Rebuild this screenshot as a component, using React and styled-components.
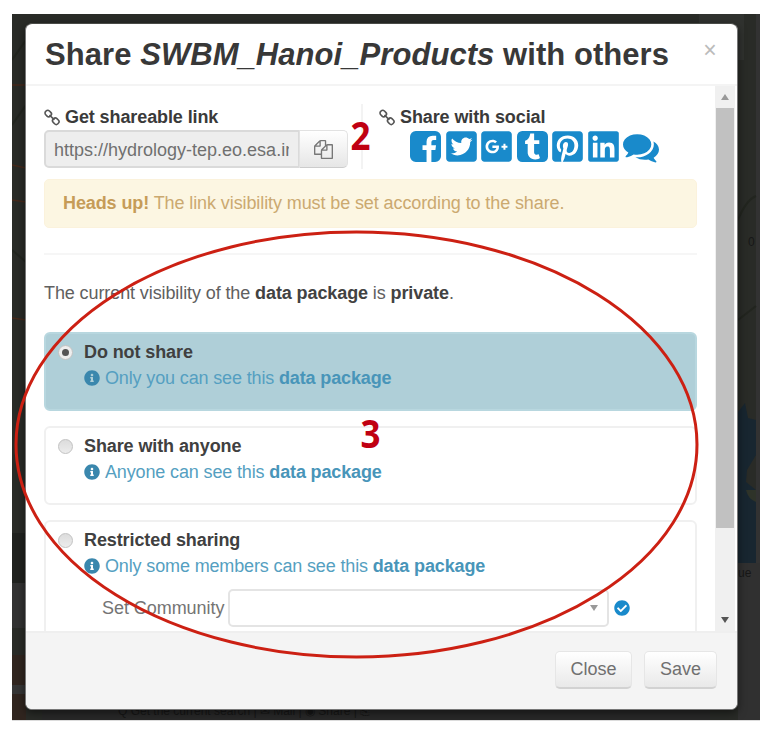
import React from "react";
import styled, { createGlobalStyle } from "styled-components";
import {
  FaTwitterSquare,
  FaGooglePlusSquare,
  FaPinterestSquare,
  FaLinkedin,
  FaInfoCircle,
  FaCheckCircle,
} from "react-icons/fa";

const GlobalStyle = createGlobalStyle`
  * { box-sizing: border-box; }
  body { margin: 0; background: #fff; font-family: "Liberation Sans", Arial, sans-serif; }
`;

const Page = styled.main`
  width: 774px;
  height: 740px;
  padding: 14px 14px 0 12px;
  overflow: hidden;
`;

const Backdrop = styled.div`
  position: relative;
  width: 748px;
  height: 707px;
  padding: 9px 22px 0 13px;
  background: #292b27;
  border-bottom: 1px solid #dcdcdc;
  overflow: hidden;
`;

const MapArt = styled.svg`
  position: absolute;
  inset: 0;
`;

const Dialog = styled.section`
  position: relative;
  display: flex;
  flex-direction: column;
  width: 713px;
  height: 687px;
  background: #fff;
  border: 1px solid #777;
  border-top: 1px solid #494b47;
  border-radius: 7px;
  overflow: hidden;
  box-shadow: 0 3px 9px rgba(0, 0, 0, 0.5);
`;

const Header = styled.header`
  display: flex;
  justify-content: space-between;
  flex: none;
  height: 62px;
  padding: 11px 20px 0 19px;
  border-bottom: 2px solid #f4f4f4;
`;

const Title = styled.h1`
  margin: 0;
  font-size: 31px;
  line-height: 39px;
  letter-spacing: 0.06px;
  color: #383838;
  white-space: nowrap;
`;

const CloseX = styled.button`
  width: 14px;
  height: 28px;
  margin-top: 1px;
  padding: 0;
  border: 0;
  background: none;
  font: 23px/28px "Liberation Sans", sans-serif;
  color: #bbb;
`;

const Body = styled.div`
  display: flex;
  flex: none;
  height: 545px;
  overflow: hidden;
`;

const Content = styled.div`
  flex: none;
  width: 671px;
  padding: 18px 0 0 18px;
`;

const ScrollTrack = styled.div`
  display: flex;
  flex-direction: column;
  align-items: center;
  width: 20px;
  margin-left: 18px;
  background: #f0f0f0;
`;

const ScrollArrow = styled.div`
  display: flex;
  align-items: center;
  justify-content: center;
  height: 22px;
`;

const Thumb = styled.div`
  width: 18px;
  height: 420px;
  margin-bottom: auto;
  background: #c1c1c1;
`;

const ShareRow = styled.div`
  display: flex;
  height: 75px;
`;

const LinkColumn = styled.div`
  width: 319px;
  height: 65px;
  border-right: 2px solid #f3f3f3;
`;

const SocialColumn = styled.div`
  padding-left: 16px;
`;

const Label = styled.div`
  display: flex;
  align-items: center;
  gap: 5px;
  height: 26px;
  font-size: 18px;
  font-weight: bold;
  letter-spacing: -0.1px;
  color: #3a3a3a;
  white-space: nowrap;
`;

const LinkGroup = styled.div`
  display: flex;
  width: 304px;
  height: 38px;
`;

const LinkField = styled.div`
  width: 255px;
  padding: 0 9px 0 8px;
  border: 2px solid #dadada;
  border-right-width: 1px;
  border-radius: 5px 0 0 5px;
  background: #eee;
  font-size: 18px;
  line-height: 36px;
  color: #707070;
  white-space: nowrap;
`;

const Clip = styled.div`
  overflow: hidden;
`;

const CopyButton = styled.button`
  display: flex;
  align-items: center;
  justify-content: center;
  width: 50px;
  padding: 0;
  border: 1px solid #e2e2e2;
  border-bottom-color: #ccc;
  border-radius: 0 5px 5px 0;
  background: linear-gradient(#fff, #e6e6e6);
`;

const SocialIcons = styled.div`
  display: flex;
  align-items: center;
  gap: 4px;
  padding-left: 31px;
  height: 33px;
  color: #198acb;
  svg { flex: none; }
`;

const SquareIcon = styled.span`
  display: flex;
  width: 31.5px;
  height: 32px;
  justify-content: center;
  align-items: center;
`;

const Alert = styled.div`
  height: 49px;
  padding-left: 18px;
  border: 1px solid #fbf2dc;
  border-radius: 5px;
  background: #fcf6e2;
  font-size: 18px;
  line-height: 47px;
  letter-spacing: -0.1px;
  color: #cba970;
  b { color: #c69c58; }
`;

const Divider = styled.hr`
  height: 2px;
  margin: 25px 0 25px;
  border: 0;
  background: #f6f6f6;
`;

const Visibility = styled.p`
  height: 26px;
  margin: 0 0 26px;
  font-size: 18px;
  line-height: 27px;
  letter-spacing: -0.1px;
  color: #606060;
  b { color: #424242; }
`;

const Option = styled.div`
  display: grid;
  grid-template-columns: 38px 1fr;
  height: ${(p) => p.$height || 79}px;
  margin-bottom: 15px;
  padding-top: 7px;
  border: 2px solid ${(p) => (p.$active ? "#b8d7df" : "#f0f0f0")};
  border-radius: 6px;
  background: ${(p) => (p.$active ? "#afcfd8" : "#fff")};
  align-content: start;
`;

const Radio = styled.span`
  display: flex;
  align-items: center;
  justify-content: center;
  width: 15px;
  height: 15px;
  margin: 4px 0 0 12px;
  border: 1px solid #c2c2c2;
  border-radius: 50%;
  background: ${(p) => (p.$checked ? "#eee" : "linear-gradient(#dcdcdc, #ececec)")};
  &::after {
    content: "";
    width: 7px;
    height: 7px;
    border-radius: 50%;
    background: ${(p) => (p.$checked ? "#555" : "transparent")};
  }
`;

const OptionName = styled.div`
  font-size: 18px;
  font-weight: bold;
  line-height: 23px;
  letter-spacing: -0.1px;
  color: #404040;
`;

const OptionHint = styled.div`
  display: flex;
  align-items: center;
  gap: 5px;
  height: 28px;
  margin-bottom: -2px;
  font-size: 18px;
  letter-spacing: -0.14px;
  color: #559fc1;
  white-space: pre;
  svg { flex: none; color: #3a87ad; }
  b { color: #4895b9; }
`;

const Community = styled.div`
  display: flex;
  align-items: center;
  height: 38px;
  margin: 11px 0 0 18px;
  font-size: 18px;
  letter-spacing: -0.05px;
  color: #747474;
  white-space: nowrap;
`;

const CommunityLabel = styled.span`
  flex: none;
  width: 126px;
`;

const Select = styled.div`
  display: flex;
  align-items: center;
  justify-content: flex-end;
  width: 381px;
  height: 38px;
  margin-right: 5px;
  padding-right: 9px;
  border: 2px solid #e4e4e4;
  border-radius: 5px;
`;

const Footer = styled.footer`
  display: flex;
  flex: 1;
  justify-content: flex-end;
  gap: 12px;
  padding: 18px 20px 0;
  border-top: 2px solid #efefef;
  background: #f4f4f4;
`;

const Button = styled.button`
  width: ${(p) => p.$width}px;
  height: 38px;
  padding: 0 0 1px;
  border: 1px solid #e6e6e6;
  border-bottom: 2px solid #d2d2d2;
  border-radius: 5px;
  background: linear-gradient(#fff, #e9e9e9);
  font: 18px "Liberation Sans", sans-serif;
  color: #707070;
`;

const Annotations = styled.svg`
  position: absolute;
  left: 0;
  top: 0;
  font: bold 39px "Open Sans", "Noto Sans", sans-serif;
`;

const ChainIcon = () => (
  <svg width="16" height="17" viewBox="0 0 17 17" fill="none" stroke="#555" strokeWidth="1.7">
    <rect x="1" y="1.500" width="7" height="5.600" rx="2.500" transform="rotate(45 4.500 4.300)" />
    <rect x="9" y="9.600" width="7" height="5.600" rx="2.500" transform="rotate(45 12.500 12.400)" />
    <path d="M5.800 5.800 11 11" />
  </svg>
);

const FacebookIcon = () => (
  <svg width="31" height="31" viewBox="0 128 1536 1536" fill="currentColor">
    <path d="M1248 128q119 0 203.500 84.500t84.500 203.500v960q0 119-84.500 203.500t-203.500 84.500h-188v-595h199l30-232h-229v-148q0-56 23.500-84t91.500-28l122-1v-207q-63-9-178-9-136 0-217.500 80t-81.500 226v171h-200v232h200v595h-532q-119 0-203.500-84.500t-84.500-203.500v-960q0-119 84.500-203.500t203.500-84.500h960z" />
  </svg>
);

const TumblrIcon = () => (
  <svg width="31" height="31" viewBox="0 128 1536 1536">
    <rect y="128" width="1536" height="1536" rx="260" fill="currentColor" />
    <path
      fill="#fff"
      d="M1136 1461l-62-183q-44 22-103 22-36 1-62-10.500t-38.500-31.500-17.500-40.500-5-43.500v-398h257v-194h-256v-326h-188q-8 0-9 10-5 44-17.500 87t-39 95-77 95-118.500 68v165h130v418q0 57 21.500 115t65 111 121 85.500 176.500 30.500q69-1 136.500-25t85.500-50z"
    />
  </svg>
);

const CommentsIcon = () => (
  <svg width="36" height="36" viewBox="0 0 1792 1792" fill="currentColor">
    <path d="M1408 768q0 139-94 257t-256.500 186.500-353.500 68.500q-86 0-176-16-124 88-278 128-36 9-86 16h-3q-11 0-20.500-8t-11.500-21q-1-3-1-6.500t.5-6.500 2-6l2.500-5 3.500-5.500 4-5 4.500-5 4-4.500q5-6 23-25t26-29.500 22.500-29 25-38.500 20.500-44q-124-72-195-177t-71-224q0-139 94-257t256.500-186.500 353.500-68.500 353.500 68.500 256.500 186.500 94 257zm384 256q0 120-71 224.500t-195 176.500q10 24 20.500 44t25 38.500 22.500 29 26 29.500 23 25q1 1 4 4.500t4.500 5 4 5 3.500 5.500l2.500 5 2 6 .5 6.500-1 6.500q-3 14-13 22t-22 7q-50-7-86-16-154-40-278-128-90 16-176 16-271 0-472-132 58 4 88 4 161 0 309-45t264-129q125-92 192-212t67-254q0-77-23-152 129 71 204 178t75 230z" />
  </svg>
);

const CopyIcon = () => (
  <svg width="19" height="19" viewBox="0 0 1792 1792" fill="#777">
    <path d="M1696 384q40 0 68 28t28 68v1216q0 40-28 68t-68 28h-960q-40 0-68-28t-28-68v-288h-544q-40 0-68-28t-28-68v-672q0-40 20-88t48-76l408-408q28-28 76-48t88-20h416q40 0 68 28t28 68v328q68-40 128-40h416zm-544 213l-299 299h299v-299zm-640-384l-299 299h299v-299zm196 647l316-316v-416h-384v416q0 40-28 68t-68 28h-416v640h512v-256q0-40 20-88t48-76zm956 804v-1152h-384v416q0 40-28 68t-68 28h-416v640h896z" />
  </svg>
);

const Triangle = ({ up, color }) => (
  <svg width="8" height="6" viewBox="0 0 8 6">
    <path d={up ? "M0 6 4 0 8 6z" : "M0 0H8L4 6z"} fill={color} />
  </svg>
);

const MapBackground = () => (
  <MapArt width="748" height="706" viewBox="12 14 748 706">
    <rect x="756" y="14" width="4" height="706" fill="#323232" />
    <rect x="699" y="14" width="45" height="46" fill="#30322f" />
    <path d="M12 85h14M12 165l14 3M12 200l14 2M12 318l14 2" fill="none" stroke="#45291b" strokeWidth="1.500" />
    <path d="M12 60 26 40M12 125l14-20M12 250l14 12M738 220q8-20 18-24M738 320l18-14" fill="none" stroke="#22251f" strokeWidth="2" />
    <path d="M738 412 745 403 748 418 756 420V455L747 470 746 482 756 490V563H738z" fill="#182630" />
    <path d="M746 490h10v12q-8-3-10-12" fill="#2e3329" />
    <rect x="738" y="563" width="22" height="157" fill="#303030" />
    <rect x="12" y="533" width="14" height="50" fill="#20221f" />
    <rect x="12" y="583" width="14" height="45" fill="#323232" />
    <rect x="12" y="655" width="14" height="65" fill="#30251f" />
    <rect x="12" y="685" width="14" height="9" fill="#353535" />
    <rect x="42" y="709" width="668" height="11" fill="#292929" />
    <g fill="#171717" fontSize="12">
      <text x="748" y="246">0</text>
      <text x="738" y="577">ue</text>
      <text x="118" y="715">Q Get the current search | ✉ Mail | ◉ Share | ⎘</text>
    </g>
  </MapArt>
);

export default function App() {
  return (
    <Page>
      <GlobalStyle />
      <Backdrop>
        <MapBackground />
        <Dialog>
          <Header>
            <Title>
              Share <i>SWBM_Hanoi_Products</i> with others
            </Title>
            <CloseX>×</CloseX>
          </Header>
          <Body>
            <Content>
              <ShareRow>
                <LinkColumn>
                  <Label>
                    <ChainIcon />
                    <span>Get shareable link</span>
                  </Label>
                  <LinkGroup>
                    <LinkField>
                      <Clip>https://hydrology-tep.eo.esa.in</Clip>
                    </LinkField>
                    <CopyButton>
                      <CopyIcon />
                    </CopyButton>
                  </LinkGroup>
                </LinkColumn>
                <SocialColumn>
                  <Label>
                    <ChainIcon />
                    <span>Share with social</span>
                  </Label>
                  <SocialIcons>
                    <SquareIcon><FacebookIcon /></SquareIcon>
                    <SquareIcon><FaTwitterSquare size={35} /></SquareIcon>
                    <SquareIcon><FaGooglePlusSquare size={35} /></SquareIcon>
                    <SquareIcon><TumblrIcon /></SquareIcon>
                    <SquareIcon><FaPinterestSquare size={35} /></SquareIcon>
                    <SquareIcon><FaLinkedin size={35} /></SquareIcon>
                    <CommentsIcon />
                  </SocialIcons>
                </SocialColumn>
              </ShareRow>
              <Alert>
                <b>Heads up!</b> The link visibility must be set according to the share.
              </Alert>
              <Divider />
              <Visibility>
                The current visibility of the <b>data package</b> is <b>private</b>.
              </Visibility>
              <Option $active>
                <Radio $checked />
                <div>
                  <OptionName>Do not share</OptionName>
                  <OptionHint>
                    <FaInfoCircle size={16} />
                    <span>Only you can see this <b>data package</b></span>
                  </OptionHint>
                </div>
              </Option>
              <Option>
                <Radio />
                <div>
                  <OptionName>Share with anyone</OptionName>
                  <OptionHint>
                    <FaInfoCircle size={16} />
                    <span>Anyone can see this <b>data package</b></span>
                  </OptionHint>
                </div>
              </Option>
              <Option $height={150}>
                <Radio />
                <div>
                  <OptionName>Restricted sharing</OptionName>
                  <OptionHint>
                    <FaInfoCircle size={16} />
                    <span>Only some members can see this <b>data package</b></span>
                  </OptionHint>
                  <Community>
                    <CommunityLabel>Set Community</CommunityLabel>
                    <Select>
                      <Triangle color="#999" />
                    </Select>
                    <FaCheckCircle size={16} color="#198acb" />
                  </Community>
                </div>
              </Option>
            </Content>
            <ScrollTrack>
              <ScrollArrow><Triangle up color="#999" /></ScrollArrow>
              <Thumb />
              <ScrollArrow><Triangle color="#555" /></ScrollArrow>
            </ScrollTrack>
          </Body>
          <Footer>
            <Button $width={77}>Close</Button>
            <Button $width={73}>Save</Button>
          </Footer>
        </Dialog>
        <Annotations width="748" height="706" viewBox="12 14 748 706">
          <ellipse cx="356.500" cy="444.500" rx="340.500" ry="212.500" fill="none" stroke="#cc2013" strokeWidth="3" />
          <text x="350.500" y="150" fill="#c00012" textLength="20" lengthAdjust="spacingAndGlyphs">2</text>
          <text x="360.500" y="448" fill="#c00012" textLength="20" lengthAdjust="spacingAndGlyphs">3</text>
        </Annotations>
      </Backdrop>
    </Page>
  );
}
